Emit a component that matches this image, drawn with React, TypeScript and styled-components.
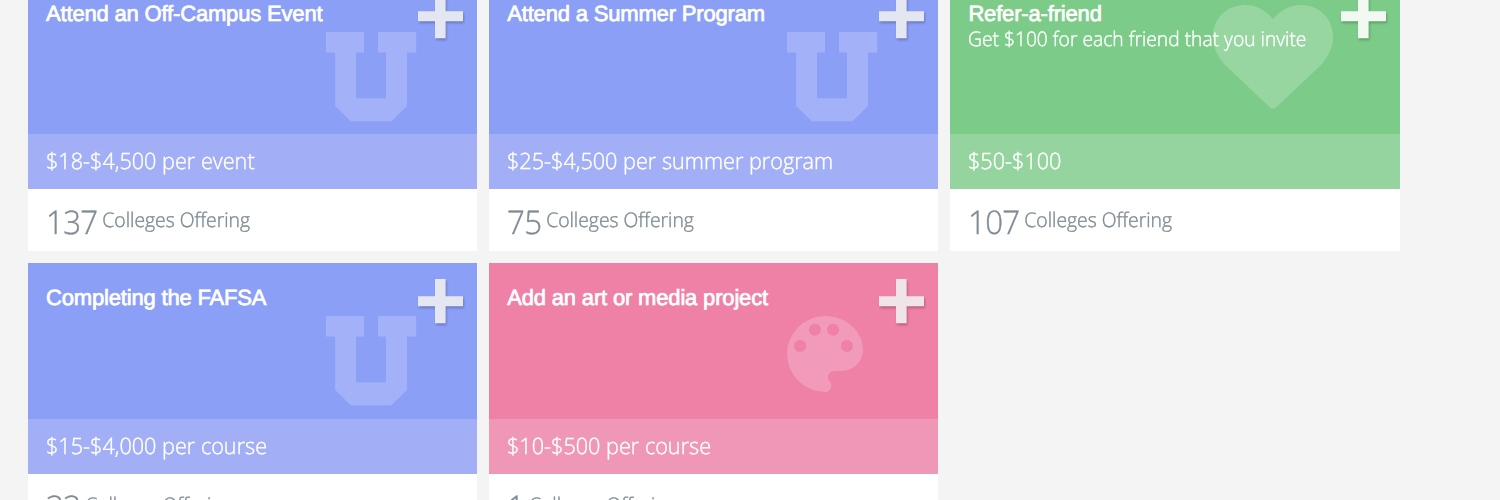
import React from "react";
import styled, { createGlobalStyle } from "styled-components";

const GlobalStyle = createGlobalStyle`
  * { box-sizing: border-box; }
  body {
    margin: 0;
    background: #f4f4f4;
    font-family: "Open Sans", sans-serif;
    text-rendering: geometricPrecision;
  }
`;

type Tone = "blue" | "green" | "pink";

const tones: Record<Tone, { base: string; band: string; mark: string; plus: string }> = {
  blue: { base: "#8c9ff7", band: "#a2aff7", mark: "#a3b1f9", plus: "#e4e7f1" },
  green: { base: "#7ccb88", band: "#95d49e", mark: "#97d6a1", plus: "#f2f9f3" },
  pink: { base: "#ef80a6", band: "#f097b7", mark: "#f29aba", plus: "#f0e4e9" },
};

const Page = styled.main`
  height: 500px;
  overflow: hidden;
`;

const Grid = styled.div`
  display: grid;
  grid-template-columns: repeat(3, 449.2px);
  grid-auto-rows: 272.3px;
  gap: 12.3px 12px;
  margin: -21.8px 0 0 28px;
`;

const Card = styled.article`
  display: flex;
  flex-direction: column;
  background: #fff;
`;

const Hero = styled.div<{ $tone: Tone }>`
  display: grid;
  grid-template-columns: minmax(0, 1fr) 45px;
  align-items: start;
  height: 156px;
  padding: 15.8px 14px 0 18px;
  background: ${(p) => tones[p.$tone].base};
  color: #fff;
`;

const Copy = styled.div`
  grid-area: 1 / 1;
  z-index: 1;
  padding-top: 6.5px;
`;

const Title = styled.h2`
  margin: 0;
  font: 400 22px/26px "Liberation Sans", sans-serif;
  letter-spacing: -0.17px;
  -webkit-text-stroke: 0.7px #fff;
  white-space: nowrap;
`;

/* Light text set slightly condensed. */
const Condensed = styled.div`
  transform: scaleX(0.962);
  transform-origin: 0 0;
  font-weight: 300;
  white-space: nowrap;
  -webkit-text-stroke: 0.4px currentColor;
`;

const Description = styled(Condensed)`
  font-size: 20px;
  line-height: 23px;
`;

const Mark = styled.svg<{ $tone: Tone }>`
  grid-area: 1 / 1;
  display: block;
  overflow: visible;
  fill: ${(p) => tones[p.$tone].mark};
`;

const LetterMark = styled(Mark)`
  margin: 37.7px 0 0 279.8px;
`;

const FriendMark = styled(Mark)`
  margin: 10.5px 0 0 245px;
`;

const AddButton = styled.button<{ $tone: Tone }>`
  grid-area: 1 / 2;
  width: 45px;
  height: 45px;
  padding: 0;
  border: 0;
  background: none;
  color: ${(p) => tones[p.$tone].plus};

  svg {
    display: block;
    overflow: visible;
    filter: drop-shadow(1px 2px 1px rgba(0, 0, 0, 0.22));
  }
`;

const Reward = styled.div<{ $tone: Tone }>`
  height: 55px;
  padding: 0 18px;
  background: ${(p) => tones[p.$tone].band};
  color: #fff;
  font-size: 22.5px;
  line-height: 54px;
`;

const Offering = styled.div`
  height: 61.3px;
  padding: 0 17.5px;
  color: #7f8b95;
`;

const OfferingText = styled(Condensed)`
  display: flex;
  align-items: flex-start;
  gap: 5px;
`;

const Count = styled.span`
  font-size: 32.5px;
  line-height: 65px;
  letter-spacing: -0.7px;
`;

const Label = styled.span`
  font-size: 20.1px;
  line-height: 61px;
`;

const UniversityMark = () => (
  <LetterMark $tone="blue" width="90.2" height="89.2" viewBox="0 0 90.2 89.2">
    <path d="M0 0H38V20.4H30V66.3H60V20.4H52V0H90.2V20.4H81V74L65.5 89.2H24.7L9.2 74V20.4H0Z" />
  </LetterMark>
);

const HeartMark = () => (
  <FriendMark $tone="green" width="120" height="104" viewBox="0 0 120 104">
    <path d="M60 14.3C53 5 43 0 32 0C13 0 0 14 0 32C0 43 5 52 12 60L56.5 102Q60 105.5 63.5 102L108 60C115 52 120 43 120 32C120 14 107 0 88 0C77 0 67 5 60 14.3Z" />
  </FriendMark>
);

const PaletteMark = () => (
  <LetterMark $tone="pink" width="76" height="76" viewBox="3 3 18 18">
    <path
      fillRule="evenodd"
      d="M12 3a9 9 0 0 0 0 18c.83 0 1.5-.67 1.5-1.5 0-.39-.15-.74-.39-1.01-.23-.26-.38-.61-.38-.99 0-.83.67-1.5 1.5-1.5H16c2.76 0 5-2.24 5-5 0-4.42-4.03-8-9-8ZM4.67 10.1a1.43 1.43 0 1 0 2.86 0a1.43 1.43 0 1 0-2.86 0ZM8.17 6.25a1.43 1.43 0 1 0 2.86 0a1.43 1.43 0 1 0-2.86 0ZM12.5 6.25a1.43 1.43 0 1 0 2.86 0a1.43 1.43 0 1 0-2.86 0ZM15.75 10.1a1.43 1.43 0 1 0 2.86 0a1.43 1.43 0 1 0-2.86 0Z"
    />
  </LetterMark>
);

const marks = { blue: UniversityMark, green: HeartMark, pink: PaletteMark };

interface Opportunity {
  tone: Tone;
  title: string;
  description?: string;
  reward: string;
  count: number;
}

const opportunities: Opportunity[] = [
  { tone: "blue", title: "Attend an Off-Campus Event", reward: "$18-$4,500 per event", count: 137 },
  { tone: "blue", title: "Attend a Summer Program", reward: "$25-$4,500 per summer program", count: 75 },
  {
    tone: "green",
    title: "Refer-a-friend",
    description: "Get $100 for each friend that you invite",
    reward: "$50-$100",
    count: 107,
  },
  { tone: "blue", title: "Completing the FAFSA", reward: "$15-$4,000 per course", count: 33 },
  { tone: "pink", title: "Add an art or media project", reward: "$10-$500 per course", count: 1 },
];

export default function App() {
  return (
    <Page>
      <GlobalStyle />
      <Grid>
        {opportunities.map((item) => {
          const Watermark = marks[item.tone];
          return (
            <Card key={item.title}>
              <Hero $tone={item.tone}>
                <Watermark />
                <Copy>
                  <Title>{item.title}</Title>
                  {item.description && <Description>{item.description}</Description>}
                </Copy>
                <AddButton $tone={item.tone} aria-label="Add">
                  <svg width="45" height="45" viewBox="0 0 45 45" fill="currentColor">
                    <path d="M17 0H27.6V17.2H45V27.2H27.6V44.2H17V27.2H0V17.2H17Z" />
                  </svg>
                </AddButton>
              </Hero>
              <Reward $tone={item.tone}>
                <Condensed>{item.reward}</Condensed>
              </Reward>
              <Offering>
                <OfferingText>
                  <Count>{item.count}</Count>
                  <Label>Colleges Offering</Label>
                </OfferingText>
              </Offering>
            </Card>
          );
        })}
      </Grid>
    </Page>
  );
}
